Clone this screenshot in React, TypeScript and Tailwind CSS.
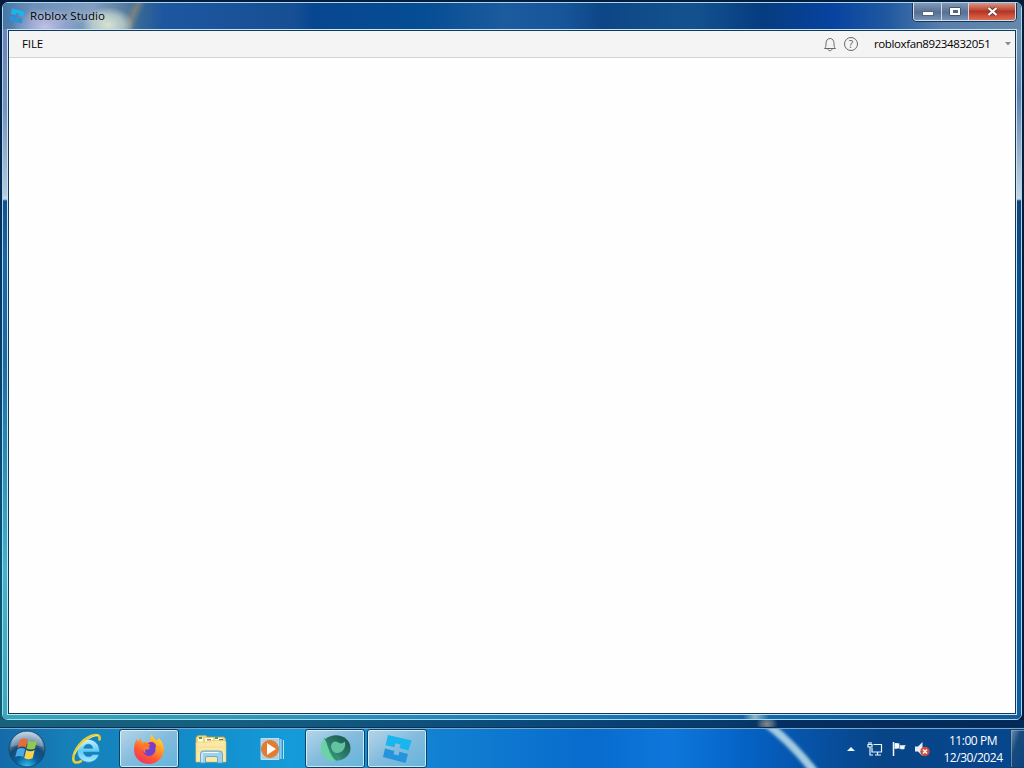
import { ReactNode } from "react";

const StartOrb = () => (
  <svg viewBox="0 0 38 38" className="size-[38px]">
    <defs>
      <radialGradient id="orb" cx="50%" cy="100%" r="95%">
        <stop offset="0" stopColor="#35c3ee" />
        <stop offset="0.35" stopColor="#075f9e" />
        <stop offset="0.62" stopColor="#164a76" />
        <stop offset="1" stopColor="#a9c3d6" />
      </radialGradient>
    </defs>
    <circle cx="19" cy="19" r="18" fill="url(#orb)" stroke="#174a72" strokeWidth="1" />
    <path d="M3 17a16 15 0 0 1 32 0q-16-6-32 0z" fill="#fff" opacity="0.25" />
    <path d="M12 10q4-2.500 7.500-.5l-1.500 8q-4-2-8.500.5z" fill="#ee6a35" />
    <path d="M20.500 10.500q4 2.500 8.500 0l-2 8q-4 2-8.500 0z" fill="#93ca4b" />
    <path d="M9.200 19.500q4-2.500 8-.5l-2 8q-4-2-8 0z" fill="#4aa9e2" />
    <path d="M18.200 20q4 2.500 8.500 0l-2 8q-4 2.500-8.500 0z" fill="#fcd04b" />
  </svg>
);

const ExplorerIcon = () => (
  <svg viewBox="0 0 32 32" className="size-8">
    <defs>
      <linearGradient id="ie" x1="0" y1="0" x2="0" y2="1">
        <stop offset="0" stopColor="#c8f4ff" />
        <stop offset="0.5" stopColor="#5fcdf7" />
        <stop offset="1" stopColor="#a8e8fc" />
      </linearGradient>
    </defs>
    <path
      d="M28.500 19H12.500c.3 3 2.300 4.600 5 4.600 2 0 3.500-.8 4.300-2.200h6.200c-1.500 4.700-5.500 7.800-10.700 7.800C11 29.200 6.300 24.500 6.300 18S11 6.400 17.300 6.400 29 11.500 28.500 19zM12.700 15.300h9c-.3-2.600-2-4-4.400-4s-4.200 1.500-4.600 4z"
      fill="url(#ie)"
      stroke="#2589c4"
      strokeWidth="0.7"
    />
    <path
      d="M28.500 6.500C29.500 2 26 1 20 3 11 6.500 2.500 17.500 2.300 25.500c0 4.500 3.500 5 7.700 2.700"
      fill="none"
      stroke="#e9cc3a"
      strokeWidth="2.600"
      strokeLinecap="round"
    />
    <path d="M27 2.500C21 2 7.500 12 4 21" fill="none" stroke="#fff3a0" strokeWidth="0.8" />
  </svg>
);

const FirefoxIcon = () => (
  <svg viewBox="0 0 32 32" className="size-8">
    <defs>
      <linearGradient id="fox" x1="0.85" y1="0" x2="0.25" y2="1">
        <stop offset="0" stopColor="#ffe83b" />
        <stop offset="0.4" stopColor="#ff9a28" />
        <stop offset="0.7" stopColor="#ff5536" />
        <stop offset="1" stopColor="#ee3460" />
      </linearGradient>
    </defs>
    <path
      d="M18.500 1c1 3 3 4 4.500 6.500 1.500-.2 2.500-1 3-2.500 3.500 3.500 5.300 8 5 12.500C30 25 24 31 16 31S1 25 1 17c0-5 1.200-8.500 3-11l.8 3 2.700-4L9 9.500c2.500-1 6-1 8 0 0-3 .2-6 1.500-8.500z"
      fill="url(#fox)"
    />
    <circle cx="16" cy="16.500" r="6.500" fill="#7142cf" />
    <path d="M9.500 11.500c3-2 6-2 8 .5l-2 1c2 2 1 3.500-1.500 3.500-2.500 0-2.500 2-.5 3.500-3.500-.2-5-4-4-8.500z" fill="#ff7a30" />
    <path d="M15 10c5-2.500 8.500.5 8 5l-4-2.500z" fill="#8a35c0" />
  </svg>
);

const FolderIcon = () => (
  <svg viewBox="0 0 34 30" className="h-[30px] w-[34px]">
    <path d="M2 3.500 4 1.500h8l1 1.500h17l1.500 2v22H2z" fill="#eed477" stroke="#c9a84d" strokeWidth="0.6" />
    <path d="M4 4h5v4H4zm7 0h8v4h-8zm10 0h7v4h-7z" fill="#fffbdc" />
    <path d="M5 3h3v2H5zm16 0h3v2h-3z" fill="#459e58" />
    <path d="M13 5h4v1.500h-4z" fill="#b67a44" />
    <path d="M25 5h4v1.500h-4z" fill="#6b6b6b" />
    <path d="M2 8h14l2-1.500h13L32 8v20H2z" fill="#fae9a6" stroke="#ddc36c" strokeWidth="0.6" />
    <path d="M3 13h28M3 17h28" stroke="#f3dc8d" />
    <path d="M6.500 29V20q0-3 3-3h16q3 0 3 3v9h-5v-5q0-1.500-1.500-1.500h-9q-1.500 0-1.500 1.500v5z" fill="#9bd1ee" stroke="#5b9ac7" strokeWidth="0.8" />
    <path d="M8 28v-8q0-1.500 1.500-1.500h15" fill="none" stroke="#effaff" strokeWidth="1" />
  </svg>
);

const MediaIcon = () => (
  <svg viewBox="0 0 26 24" className="h-6 w-[26px]">
    <path d="M20.300 2h1.200v20h-1.200zm2.700 1h1v19h-1z" fill="#c2dcef" />
    <path d="M1 1.500h18v21H1z" fill="#b4ccda" stroke="#d5e8f4" strokeWidth="0.8" />
    <circle cx="10" cy="12" r="8.500" fill="#e87a2c" stroke="#c4854f" />
    <path d="M7 6 16 12l-9 6z" fill="#fff" />
  </svg>
);

const SphereIcon = () => (
  <svg viewBox="0 0 32 30" className="h-[30px] w-8">
    <defs>
      <linearGradient id="sphere" x1="0" y1="1" x2="1" y2="0">
        <stop offset="0" stopColor="#45c79b" />
        <stop offset="0.45" stopColor="#2f7f6c" />
        <stop offset="1" stopColor="#164f4b" />
      </linearGradient>
    </defs>
    <ellipse cx="17" cy="14" rx="14.500" ry="12.800" fill="url(#sphere)" />
    <path d="M4.500 5c-4 8-3.500 16 3 20 3 2 6.500 3 9.500 2C11 22 9.500 14 6.500 6z" fill="#6bd3a5" />
    <path d="M12 12c1-5 5-5.500 8-3 2 1 4 .5 6-1.500 1 6-2 11-7 11.500-4 .5-7-3-7-7z" fill="#62c39f" />
    <path d="M5.500 4C11 10 12 19 18 26" fill="none" stroke="#2a826c" strokeWidth="1" />
  </svg>
);

const StudioIcon = ({ className }: { className: string }) => (
  <svg viewBox="0 0 30 30" className={className}>
    <path d="M6 1 29.500 6.500l-3 10-9-2.500 1-3.500-5-1.300-1 4-9-2z" fill="#18b5ef" />
    <path d="M3 14.500l9.500 2.500-1 3.300 5 1.300 1-3.800 8.500 2.200L23.500 29 1 23z" fill="#2495dc" />
  </svg>
);

const TaskButton = ({ active, children }: { active?: boolean; children: ReactNode }) => (
  <div
    className={
      active
        ? "flex h-[39px] w-[60px] items-center justify-center rounded-[3px] border border-[#0a4267] bg-linear-to-br from-[#b5d5e8] via-[#83bbdd] to-[#62b4dd] shadow-[inset_0_0_0_1px_rgba(225,245,255,0.8)]"
        : "flex h-[39px] w-[60px] items-center justify-center"
    }
  >
    {children}
  </div>
);

const TitleBar = () => (
  <div className="flex h-[26px] shrink-0 justify-between bg-[radial-gradient(ellipse_26px_18px_at_105px_22px,rgba(222,232,210,0.95)_0,rgba(190,208,205,0.8)_60%,transparent_100%),radial-gradient(ellipse_34px_18px_at_42px_24px,rgba(202,194,232,0.95)_0,rgba(160,170,215,0.6)_60%,transparent_100%),linear-gradient(115deg,transparent_116px,rgba(170,145,110,0.5)_123px,transparent_130px),linear-gradient(90deg,#4577a7_0,#6d8fb8_30px,#809dc0_90px,#53799b_125px,#356695_138px,#1d57a0_160px,#174f94_290px,#074790_310px,#064d93_420px,#1b5b9e_500px,#17559a_560px,#0d4686_600px,#14528f_690px,#063c80_760px,#0743a0_830px,#2059a0_885px,#5b7fae_940px,#6688a9_100%)]">
    <div className="flex h-[26px] items-center pl-[6px]">
      <StudioIcon className="size-4" />
      <span className="ml-[5px] whitespace-nowrap text-[11.5px] tracking-[0.06px] text-black [text-shadow:0_0_6px_rgba(255,255,255,0.8)]">
        Roblox Studio
      </span>
    </div>
    <div className="mr-[5px] flex h-[18px] overflow-hidden rounded-b-[4px] border border-t-0 border-[#d1e0ef] shadow-[0_0_0_1px_#193753]">
      <div className="flex w-[28px] items-end justify-center border-r border-[#cad9e9] bg-linear-to-b from-[#8498b6] via-[#566f93] via-55% to-[#7892b5] pb-[4px]">
        <div className="h-[5px] w-[12px] border border-[#53657e] bg-white" />
      </div>
      <div className="flex w-[27px] items-center justify-center border-r border-[#cad9e9] bg-linear-to-b from-[#8498b6] via-[#566f93] via-55% to-[#7892b5]">
        <div className="flex h-[9px] w-[12px] items-center justify-center rounded-[1px] border border-[#45566e] bg-white">
          <div className="h-[3px] w-[5px] bg-[#536784]" />
        </div>
      </div>
      <div className="flex w-[46px] items-center justify-center bg-linear-to-b from-[#d79383] via-[#b73423] via-50% to-[#dd6c50]">
        <svg viewBox="0 0 13 11" className="h-[11px] w-[13px]">
          <path d="m2.500 2 8 7m0-7-8 7" stroke="#733334" strokeWidth="4" />
          <path d="m2.500 2 8 7m0-7-8 7" stroke="#fff" strokeWidth="2.300" />
        </svg>
      </div>
    </div>
  </div>
);

const MenuBar = () => (
  <div className="flex h-[27px] shrink-0 items-center border-b border-[#d4d4d4] bg-[#f4f4f4] text-black">
    <span className="ml-[13px] text-[11.5px] tracking-[-0.1px]">FILE</span>
    <div className="ml-auto flex items-center">
      <svg viewBox="0 0 14 15" className="h-[15px] w-[14px]" fill="none" stroke="#686868">
        <path d="M1.500 11.500c1.300-1.200 1.500-2.500 1.500-5 0-3 1.500-5 4-5s4 2 4 5c0 2.500.2 3.800 1.500 5zM5 12c.3 2.300 3.700 2.300 4 0" />
      </svg>
      <div className="ml-[7px] flex size-[14px] items-center justify-center rounded-full border border-[#686868] text-[10px] leading-none text-[#555]">
        ?
      </div>
      <span className="ml-4 w-[117px] whitespace-nowrap text-[11.5px] tracking-[-0.39px]">robloxfan89234832051</span>
      <svg viewBox="0 0 6 4" className="mr-[4px] ml-[14px] h-[4px] w-[6px]">
        <path d="M0 0h6L3 3.500z" fill="#8c8c8c" />
      </svg>
    </div>
  </div>
);

const Tray = () => (
  <div className="ml-auto flex h-full items-center text-white">
    <svg viewBox="0 0 8 4" className="h-[4px] w-[8px]">
      <path d="M0 4 4 0l4 4z" fill="#eef8ff" />
    </svg>
    <svg viewBox="0 0 16 16" className="ml-[12px] size-4" fill="none" stroke="#eaf5fd" strokeWidth="1.200">
      <path d="M6.500 3.500h8v7.500H5V7M8 14h6M10.500 11v3M1 3.500h4V6H1zM2 1v2m2-2v2M3 6v8h3" />
    </svg>
    <svg viewBox="0 0 16 16" className="ml-[8px] size-4">
      <path d="M2.500 1v14" stroke="#f3f9fe" strokeWidth="1.500" />
      <path d="M3.500 2.500c2-1 3 0 5 0v1.200c2 .8 3.500.5 6.500.3-1.500 1-1.500 2-1.500 4-3 .8-4 .2-5.500-.8-1.500.7-3 .2-4.500.8z" fill="#f3f9fe" />
      <path d="M8.700 3v4.500" stroke="#1d5ca0" strokeWidth="0.700" />
    </svg>
    <svg viewBox="0 0 16 16" className="ml-[7px] size-4">
      <path d="M1 5.500h3L8.500 1v14L4 10.500H1z" fill="#e4edf4" />
      <circle cx="11" cy="10.500" r="4.700" fill="#d34a36" />
      <path d="m9 8.500 4 4m0-4-4 4" stroke="#fff" strokeWidth="1.500" />
    </svg>
    <div className="ml-[12px] w-[62px] whitespace-nowrap text-center text-[12px] leading-[17px] tracking-[-0.46px]">
      <div>11:00 PM</div>
      <div>12/30/2024</div>
    </div>
    <div className="ml-[6px] h-[39px] w-[14px] border border-r-0 border-[#163d65] bg-linear-to-br from-[#6f91b0] via-[#174b7e] via-40% to-[#0b4380] shadow-[inset_1px_1px_0_rgba(140,180,215,0.6)]" />
  </div>
);

const Taskbar = () => (
  <div className="relative flex h-10 shrink-0 items-center overflow-hidden border-t border-[#77a8cd] bg-[linear-gradient(90deg,#146aaa_0,#1680b8_70px,#128bc8_180px,#159bd9_290px,#1382d2_430px,#086bcd_590px,#0e77db_670px,#0561c4_750px,#074f9f_825px,#074587_880px,#06468e_100%)]">
    <svg viewBox="0 0 100 40" className="absolute top-0 left-[740px] h-10 w-[100px]">
      <defs>
        <filter id="soft">
          <feGaussianBlur stdDeviation="1.500" />
        </filter>
      </defs>
      <path d="M23-8Q50 11 77 46" fill="none" stroke="#a2cbe1" strokeWidth="8" filter="url(#soft)" />
    </svg>
    <div className="relative flex w-full items-center">
      <div className="ml-2 mr-[11px]">
        <StartOrb />
      </div>
      <div className="flex gap-[2px]">
        <TaskButton>
          <ExplorerIcon />
        </TaskButton>
        <TaskButton active>
          <FirefoxIcon />
        </TaskButton>
        <TaskButton>
          <FolderIcon />
        </TaskButton>
        <TaskButton>
          <MediaIcon />
        </TaskButton>
        <TaskButton active>
          <SphereIcon />
        </TaskButton>
        <TaskButton active>
          <StudioIcon className="size-[30px]" />
        </TaskButton>
      </div>
      <Tray />
    </div>
  </div>
);

const App = () => {
  return (
    <div className="flex h-[768px] w-[1024px] flex-col overflow-hidden bg-[linear-gradient(180deg,#061c3d_0,#062d5a_200px,#064c75_500px,#135d70_720px)] font-['Open_Sans','Noto_Sans',sans-serif]">
      <div className="flex h-[720px] shrink-0 bg-[linear-gradient(90deg,transparent_1018px,#041c3c_1019px)] px-[2px] pt-[2px]">
        <div className="flex w-[1020px] flex-col overflow-hidden rounded-[6px] border border-[#a5d9ec]">
          <TitleBar />
          <div className="flex h-[686px] shrink-0">
            <div className="w-1 bg-[linear-gradient(180deg,#7082b8_0,#7a91bd_80px,#b7c7db_165px,#c8d9ea_170px,#125191_172px,#1b65a4_230px,#1c69a4_330px,#2b8db5_430px,#40b5cb_540px,#38aabe_100%)]" />
            <div className="flex w-[1010px] flex-col border border-[#c6e5f3]">
              <div className="flex grow flex-col border border-[#12385b] bg-[#fefefe]">
                <MenuBar />
              </div>
            </div>
            <div className="w-1 bg-[linear-gradient(180deg,#7295ae_0,#607dac_65px,#aebdd0_140px,#c8d5e8_170px,#164078_172px,#064f91_250px,#0c579a_500px,#0b5da5_100%)]" />
          </div>
          <div className="h-1 shrink-0 bg-[linear-gradient(90deg,#35a8bc_0,#319cb6_200px,#2b8fbd_350px,#1671b7_650px,#1464ab_740px,#90b5c9_752px,#1467ad_766px,#15599b_100%)]" />
        </div>
      </div>
      <div className="h-2 shrink-0 border-b border-[#092f54] bg-[radial-gradient(ellipse_11px_9px_at_767px_4px,rgba(160,150,135,0.85)_0,rgba(120,135,145,0.6)_50%,transparent_100%),linear-gradient(90deg,#18627c_0,#145e81_250px,#0b4b7b_500px,#063968_740px,#062e61_782px,#042958_100%)]" />
      <Taskbar />
    </div>
  );
};

export default App;
